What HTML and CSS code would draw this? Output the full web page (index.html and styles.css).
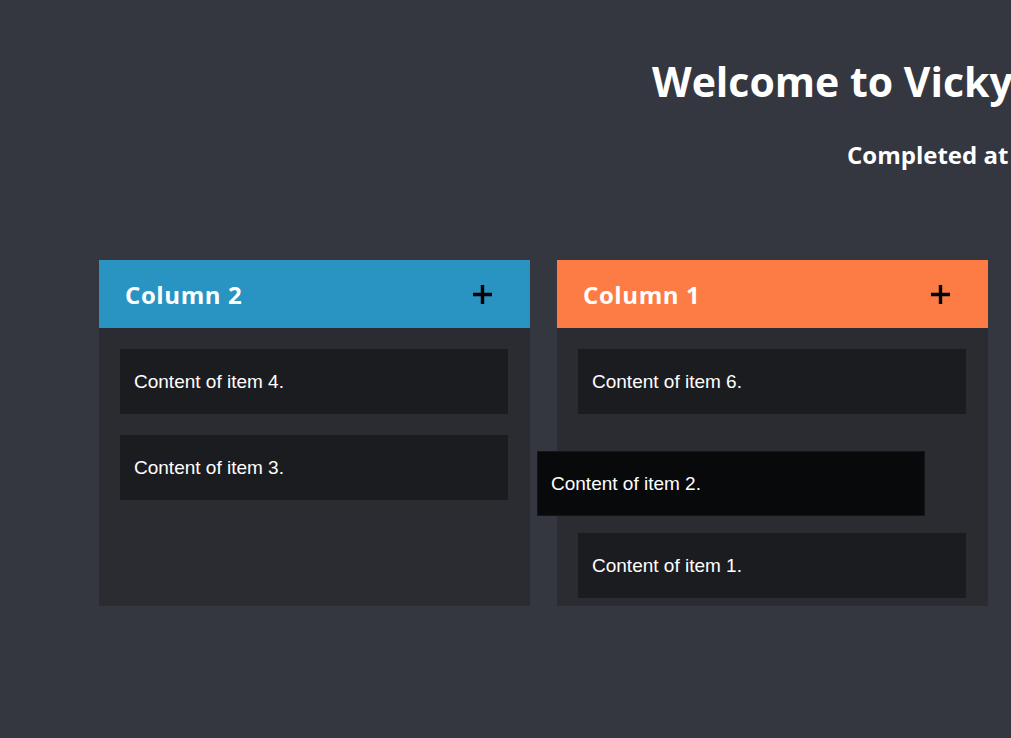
FILE: index.html
```html
<!DOCTYPE html>
<html lang="en">
<head>
<meta charset="utf-8">
<title>Kanban</title>
<link rel="stylesheet" href="styles.css">
</head>
<body>
<main class="page">
  <header class="intro">
    <h1 class="title">Welcome to Vicky's Kanban Board</h1>
    <h2 class="subtitle">Completed at a glance</h2>
  </header>
  <section class="board">
    <div class="column">
      <div class="column-head head-blue">
        <span class="column-title">Column 2</span>
        <svg class="plus" width="19" height="19" viewBox="0 0 19 19"><path d="M9.5 0V19M0 9.5H19" stroke="#000" stroke-width="3.4" fill="none"/></svg>
      </div>
      <div class="column-body">
        <div class="item">Content of item 4.</div>
        <div class="item">Content of item 3.</div>
      </div>
    </div>
    <div class="column">
      <div class="column-head head-orange">
        <span class="column-title">Column 1</span>
        <svg class="plus" width="19" height="19" viewBox="0 0 19 19"><path d="M9.5 0V19M0 9.5H19" stroke="#000" stroke-width="3.4" fill="none"/></svg>
      </div>
      <div class="column-body tail">
        <div class="item">Content of item 6.</div>
        <div class="placeholder"></div>
        <div class="item">Content of item 1.</div>
      </div>
    </div>
  </section>
  <div class="item dragging">Content of item 2.</div>
</main>
</body>
</html>
```
FILE: styles.css
```css
html, body {
  margin: 0;
  padding: 0;
}
body {
  background: #343640;
  color: #ffffff;
  width: 1011px;
  height: 738px;
  overflow: hidden;
  font-family: "Open Sans", "Noto Sans", sans-serif;
}
.page {
  position: relative;
  padding-top: 61px;
}
.intro {
  white-space: nowrap;
}
.title {
  margin: 0;
  padding-left: 652px;
  font-size: 41px;
  line-height: 41px;
  font-weight: 700;
}
.subtitle {
  margin: 41px 0 0;
  padding-left: 847px;
  font-size: 24px;
  line-height: 24px;
  font-weight: 700;
}
.board {
  display: flex;
  align-items: stretch;
  gap: 27px;
  margin-top: 93px;
  padding-left: 99px;
}
.column {
  width: 431px;
  display: flex;
  flex-direction: column;
}
.column-head {
  height: 68px;
  display: flex;
  align-items: center;
  justify-content: space-between;
  padding: 0 38px 0 26px;
}
.head-blue { background: #2993c2; }
.head-orange { background: #fd7c46; }
.column-title {
  font-size: 24px;
  font-weight: 700;
  letter-spacing: 0.6px;
}
.plus { display: block; }
.column-body {
  flex: 1;
  background: #2b2c31;
  padding: 21px 22px 21px 21px;
  display: flex;
  flex-direction: column;
  gap: 21px;
}
.column-body.tail {
  padding-bottom: 8px;
}
.item {
  height: 65px;
  box-sizing: border-box;
  background: #1b1c20;
  display: flex;
  align-items: center;
  padding: 0 14px;
  font-family: "Liberation Sans", Arial, sans-serif;
  font-size: 19px;
}
.placeholder {
  height: 77px;
}
.dragging {
  position: absolute;
  left: 537px;
  top: 451px;
  width: 388px;
  background: #08090b;
  border: 1px solid #15161a;
  padding-left: 13px;
}
```
